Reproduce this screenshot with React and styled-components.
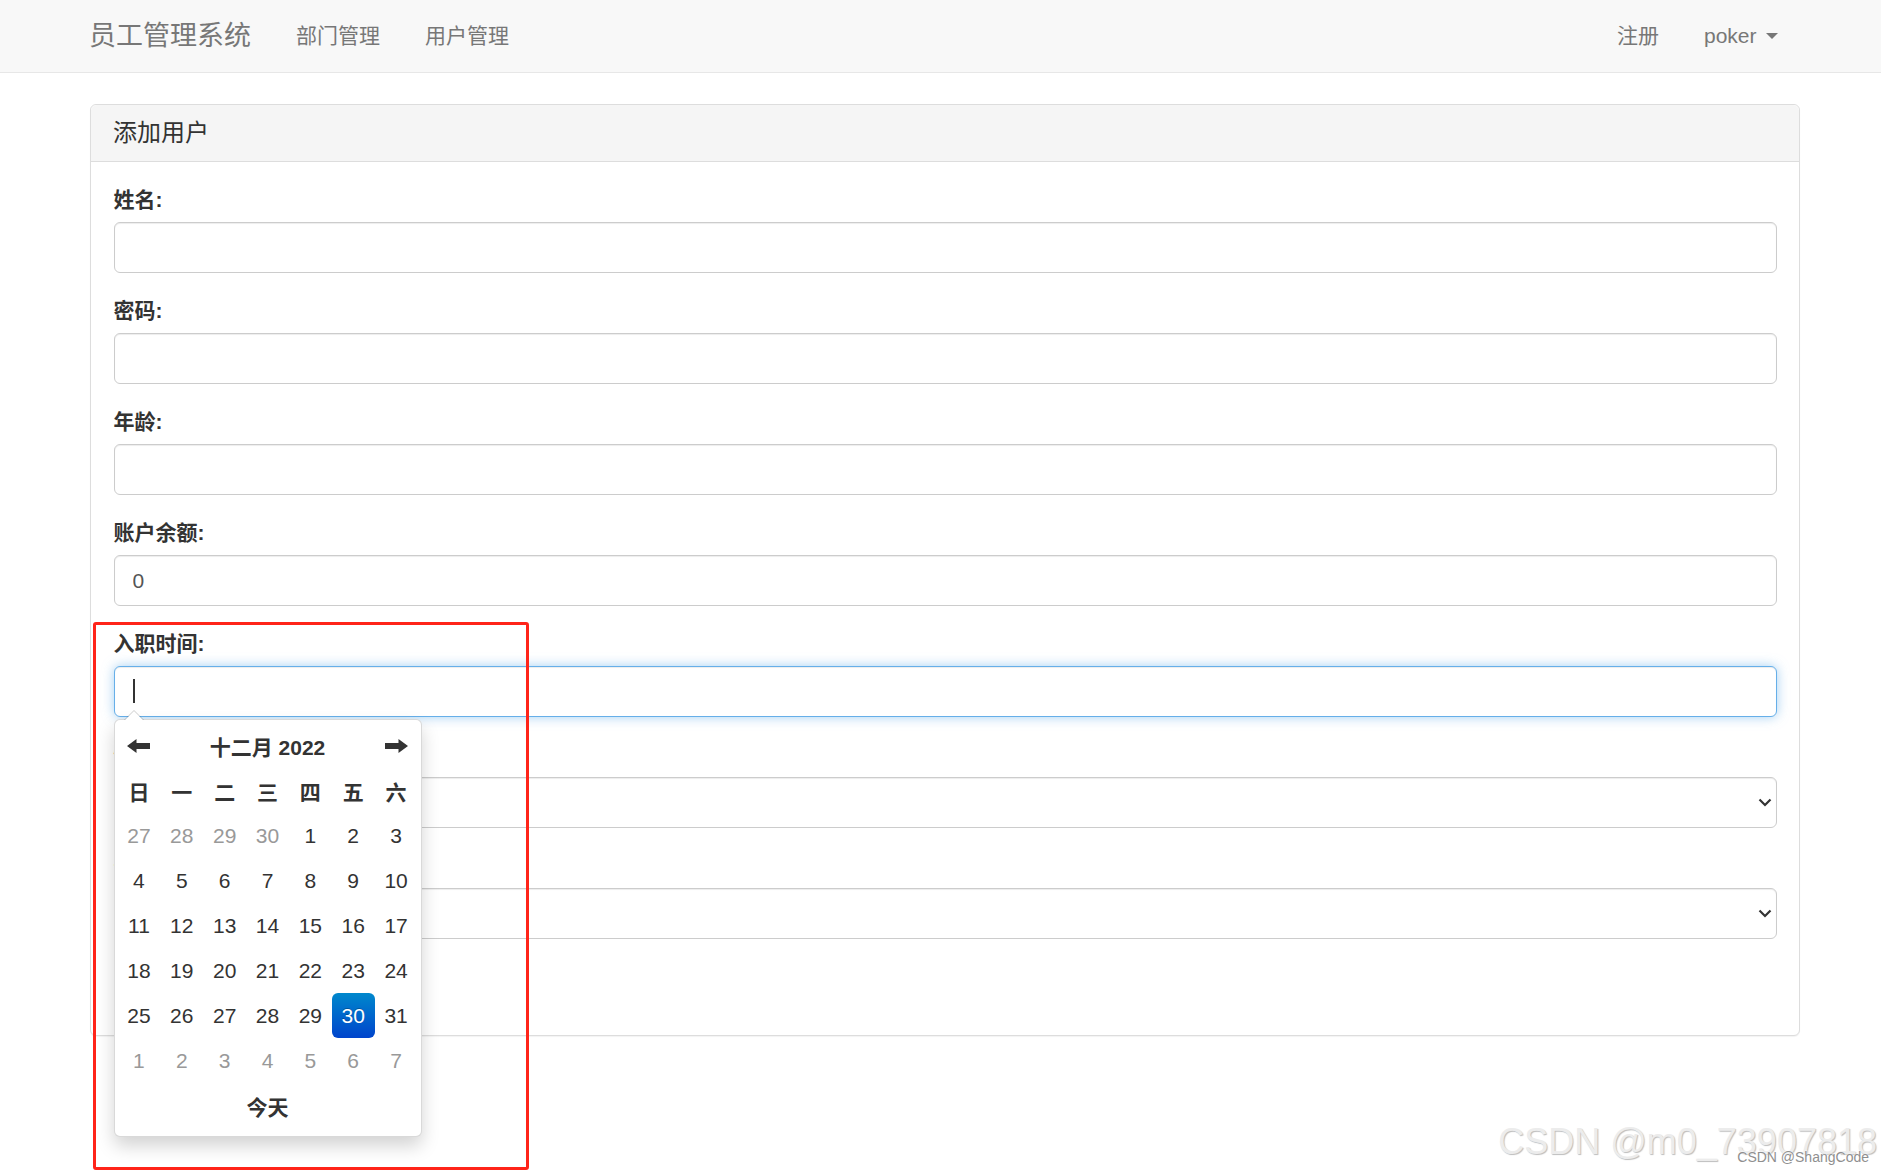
import React from "react";
import styled, { createGlobalStyle } from "styled-components";

const GlobalStyle = createGlobalStyle`
  html, body {
    margin: 0;
    padding: 0;
    background: #ffffff;
    overflow: hidden;
  }
  body {
    font-family: "Liberation Sans", "Noto Sans CJK SC", sans-serif;
    color: #333333;
  }
  * {
    box-sizing: border-box;
  }
`;

const Page = styled.div`
  position: relative;
  height: 1175px;
  overflow: hidden;
`;

const Navbar = styled.nav`
  height: 73px;
  background: #f8f8f8;
  border-bottom: 1px solid #e7e7e7;
`;

const Container = styled.div`
  width: 1710px;
  margin-left: 90px;
`;

const NavInner = styled(Container)`
  height: 100%;
  display: flex;
  align-items: center;
`;

const Brand = styled.a`
  font-size: 27px;
  line-height: 30px;
  color: #777777;
  padding-right: 22.5px;
  margin-left: -1px;
  text-decoration: none;
`;

const NavLink = styled.a`
  font-size: 21px;
  line-height: 30px;
  color: #777777;
  padding: 0 22.5px;
  text-decoration: none;
  display: flex;
  align-items: center;
`;

const NavRight = styled.div`
  margin-left: auto;
  display: flex;
  align-items: center;
`;

const Caret = styled.span`
  display: inline-block;
  width: 0;
  height: 0;
  margin-left: 9px;
  border-top: 6px solid #777777;
  border-left: 6px solid transparent;
  border-right: 6px solid transparent;
`;

const Main = styled(Container)`
  padding-top: 31px;
`;

const Panel = styled.div`
  border: 1px solid #dddddd;
  border-radius: 6px;
  box-shadow: 0 1px 1px rgba(0, 0, 0, 0.05);
  background: #ffffff;
`;

const PanelHeading = styled.div`
  background: #f5f5f5;
  border-bottom: 1px solid #dddddd;
  border-radius: 6px 6px 0 0;
  padding: 15px 22px;
  font-size: 24px;
  line-height: 26px;
  color: #333333;
`;

const PanelBody = styled.div`
  padding: 22.5px;
`;

const FormGroup = styled.div`
  margin-bottom: 22.5px;
`;

const Label = styled.label`
  display: block;
  font-size: 21px;
  line-height: 30px;
  font-weight: 700;
  color: #333333;
  margin-bottom: 7.5px;
`;

const Field = styled.div`
  position: relative;
`;

const Input = styled.input`
  display: block;
  width: 100%;
  height: 51px;
  padding: 9px 18px;
  font-family: inherit;
  font-size: 21px;
  line-height: 30px;
  color: #555555;
  background: #ffffff;
  border: 1px solid ${(p) => (p.$focused ? "#66afe9" : "#cccccc")};
  border-radius: 6px;
  outline: none;
  caret-color: transparent;
  box-shadow: ${(p) =>
    p.$focused
      ? "inset 0 1px 1px rgba(0,0,0,.075), 0 0 12px rgba(102,175,233,.6)"
      : "inset 0 1px 1px rgba(0,0,0,.075)"};
`;

const TextCursor = styled.span`
  position: absolute;
  left: 19px;
  top: 13px;
  width: 2px;
  height: 24px;
  background: #333333;
`;

const Select = styled.select`
  display: block;
  width: 100%;
  height: 51px;
  padding: 9px 18px;
  font-family: inherit;
  font-size: 21px;
  color: #555555;
  background: #ffffff;
  border: 1px solid #cccccc;
  border-radius: 6px;
  appearance: none;
  outline: none;
  box-shadow: inset 0 1px 1px rgba(0, 0, 0, 0.075);
`;

const Chevron = styled.svg`
  position: absolute;
  right: 5px;
  top: 21px;
  pointer-events: none;
`;

const SubmitButton = styled.button`
  height: 51px;
  padding: 9px 18px;
  font-family: inherit;
  font-size: 21px;
  line-height: 30px;
  color: #ffffff;
  background: #337ab7;
  border: 1px solid #2e6da4;
  border-radius: 6px;
`;

const Datepicker = styled.div`
  position: absolute;
  left: 0;
  top: calc(100% + 2px);
  z-index: 10;
  width: 308px;
  padding: 3px 3px 8px;
  background: #ffffff;
  border: 1px solid rgba(0, 0, 0, 0.15);
  border-radius: 6px;
  box-shadow: 0 9px 18px rgba(0, 0, 0, 0.175);

  &::before {
    content: "";
    position: absolute;
    top: -10px;
    left: 9px;
    border-left: 10px solid transparent;
    border-right: 10px solid transparent;
    border-bottom: 10px solid rgba(0, 0, 0, 0.2);
  }
  &::after {
    content: "";
    position: absolute;
    top: -9px;
    left: 10px;
    border-left: 9px solid transparent;
    border-right: 9px solid transparent;
    border-bottom: 9px solid #ffffff;
  }
`;

const CalGrid = styled.div`
  display: grid;
  grid-template-columns: repeat(7, 1fr);
  grid-auto-rows: 45px;
`;

const Cell = styled.div`
  display: flex;
  align-items: center;
  justify-content: center;
  font-size: 21px;
  color: ${(p) => (p.$muted ? "#999999" : "#333333")};
  font-weight: ${(p) => (p.$bold ? 700 : 400)};
  border-radius: 6px;
  ${(p) =>
    p.$active &&
    `
    color: #ffffff;
    background: linear-gradient(to bottom, #0088cc, #0044cc);
    text-shadow: 0 -1px 0 rgba(0,0,0,.25);
  `}
`;

const Title = styled(Cell)`
  grid-column: span 5;
  font-weight: 700;
`;

const Today = styled(Cell)`
  grid-column: span 7;
  font-weight: 700;
`;

const Annotation = styled.div`
  position: absolute;
  left: 93px;
  top: 622px;
  width: 436px;
  height: 548px;
  border: 3.5px solid #ff2419;
  border-radius: 3px;
  pointer-events: none;
  z-index: 20;
`;

const WatermarkBig = styled.div`
  position: absolute;
  right: 4px;
  top: 1124px;
  font-family: "Liberation Sans", Arial, sans-serif;
  font-size: 36px;
  line-height: 36px;
  color: #ececec;
  text-shadow: 1px 1px 1px #bdbdbd;
  white-space: nowrap;
  z-index: 30;
`;

const WatermarkSmall = styled.div`
  position: absolute;
  right: 12px;
  top: 1149px;
  font-family: "Liberation Sans", Arial, sans-serif;
  font-size: 14px;
  line-height: 16px;
  color: #8f8f8f;
  text-shadow: 0 0 2px #ffffff, 0 0 2px #ffffff;
  white-space: nowrap;
  z-index: 31;
`;

const Arrow = ({ dir }) => (
  <svg width="23" height="14" viewBox="0 0 23 14">
    <path
      d="M0 7 L9.5 0 L9.5 4 L23 4 L23 10 L9.5 10 L9.5 14 Z"
      fill="#333"
      transform={dir === "right" ? "translate(23 0) scale(-1 1)" : undefined}
    />
  </svg>
);

const SelectChevron = () => (
  <Chevron width="14" height="9" viewBox="0 0 14 9">
    <polyline
      points="1.5,1.5 7,7 12.5,1.5"
      fill="none"
      stroke="#333"
      strokeWidth="2.2"
    />
  </Chevron>
);

const weekdays = ["日", "一", "二", "三", "四", "五", "六"];

const days = [
  ...[27, 28, 29, 30].map((d) => ({ d, muted: true })),
  ...Array.from({ length: 31 }, (_, i) => ({ d: i + 1, active: i + 1 === 30 })),
  ...[1, 2, 3, 4, 5, 6, 7].map((d) => ({ d, muted: true })),
];

const fields = [
  { label: "姓名:", value: "" },
  { label: "密码:", value: "" },
  { label: "年龄:", value: "" },
  { label: "账户余额:", value: "0" },
];

const App = () => {
  return (
    <Page>
      <GlobalStyle />
      <Navbar>
        <NavInner>
          <Brand>员工管理系统</Brand>
          <NavLink>部门管理</NavLink>
          <NavLink>用户管理</NavLink>
          <NavRight>
            <NavLink>注册</NavLink>
            <NavLink>
              poker
              <Caret />
            </NavLink>
          </NavRight>
        </NavInner>
      </Navbar>

      <Main>
        <Panel>
          <PanelHeading>添加用户</PanelHeading>
          <PanelBody>
            {fields.map((f) => (
              <FormGroup key={f.label}>
                <Label>{f.label}</Label>
                <Input defaultValue={f.value} />
              </FormGroup>
            ))}

            <FormGroup>
              <Label>入职时间:</Label>
              <Field>
                <Input $focused readOnly />
                <TextCursor />
                <Datepicker>
                  <CalGrid>
                    <Cell>
                      <Arrow dir="left" />
                    </Cell>
                    <Title>十二月 2022</Title>
                    <Cell>
                      <Arrow dir="right" />
                    </Cell>
                    {weekdays.map((w) => (
                      <Cell key={w} $bold>
                        {w}
                      </Cell>
                    ))}
                    {days.map((day, i) => (
                      <Cell key={i} $muted={day.muted} $active={day.active}>
                        {day.d}
                      </Cell>
                    ))}
                    <Today>今天</Today>
                  </CalGrid>
                </Datepicker>
              </Field>
            </FormGroup>

            <FormGroup>
              <Label>性别:</Label>
              <Field>
                <Select defaultValue="">
                  <option value=""></option>
                </Select>
                <SelectChevron />
              </Field>
            </FormGroup>

            <FormGroup>
              <Label>部门:</Label>
              <Field>
                <Select defaultValue="">
                  <option value=""></option>
                </Select>
                <SelectChevron />
              </Field>
            </FormGroup>

            <SubmitButton>提 交</SubmitButton>
          </PanelBody>
        </Panel>
      </Main>

      <Annotation />
      <WatermarkBig>CSDN @m0_73907818</WatermarkBig>
      <WatermarkSmall>CSDN @ShangCode</WatermarkSmall>
    </Page>
  );
};

export default App;
